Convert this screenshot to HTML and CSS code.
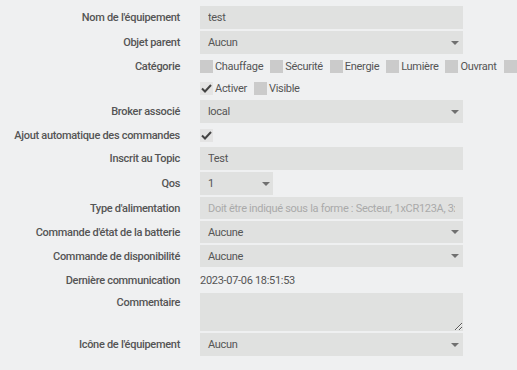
FILE: index.html
```html
<!DOCTYPE html>
<html>
<head>
  <meta charset="utf-8">
  <title>Equipement</title>
  <link rel="stylesheet" href="styles.css">
</head>
<body>
  <form class="eq-form">
    <div class="form-group">
      <label>Nom de l'équipement</label>
      <div class="control"><input type="text" class="field" value="test"></div>
    </div>
    <div class="form-group">
      <label>Objet parent</label>
      <div class="control"><div class="field select">Aucun</div></div>
    </div>
    <div class="form-group check-row">
      <label>Catégorie</label>
      <div class="control checks">
        <span class="check"><span class="box"></span>Chauffage</span>
        <span class="check"><span class="box"></span>Sécurité</span>
        <span class="check"><span class="box"></span>Energie</span>
        <span class="check"><span class="box"></span>Lumière</span>
        <span class="check"><span class="box"></span>Ouvrant</span>
        <span class="check"><span class="box"></span></span>
      </div>
    </div>
    <div class="form-group check-row">
      <label></label>
      <div class="control checks">
        <span class="check"><span class="box checked"><svg width="13" height="13" viewBox="0 0 13 13"><path d="M2 6.5 L5 9.5 L11 3" fill="none" stroke="#444" stroke-width="2"/></svg></span>Activer</span>
        <span class="check"><span class="box"></span>Visible</span>
      </div>
    </div>
    <div class="form-group">
      <label>Broker associé</label>
      <div class="control"><div class="field select">local</div></div>
    </div>
    <div class="form-group check-row">
      <label>Ajout automatique des commandes</label>
      <div class="control checks">
        <span class="check"><span class="box checked"><svg width="13" height="13" viewBox="0 0 13 13"><path d="M2 6.5 L5 9.5 L11 3" fill="none" stroke="#444" stroke-width="2"/></svg></span></span>
      </div>
    </div>
    <div class="form-group">
      <label>Inscrit au Topic</label>
      <div class="control"><input type="text" class="field" value="Test"></div>
    </div>
    <div class="form-group">
      <label>Qos</label>
      <div class="control"><div class="field select small">1</div></div>
    </div>
    <div class="form-group slim">
      <label>Type d'alimentation</label>
      <div class="control"><input type="text" class="field" placeholder="Doit être indiqué sous la forme : Secteur, 1xCR123A, 3xAA"></div>
    </div>
    <div class="form-group slim">
      <label>Commande d'état de la batterie</label>
      <div class="control"><div class="field select">Aucune</div></div>
    </div>
    <div class="form-group slim">
      <label>Commande de disponibilité</label>
      <div class="control"><div class="field select">Aucune</div></div>
    </div>
    <div class="form-group text-row">
      <label>Dernière communication</label>
      <div class="control"><span class="static">2023-07-06 18:51:53</span></div>
    </div>
    <div class="form-group top">
      <label>Commentaire</label>
      <div class="control"><textarea class="field area"></textarea></div>
    </div>
    <div class="form-group">
      <label>Icône de l'équipement</label>
      <div class="control"><div class="field select">Aucun</div></div>
    </div>
  </form>
</body>
</html>
```

FILE: styles.css
```css
body {
  margin: 0;
  background-color: #eff0f1;
  font-family: Roboto, "Liberation Sans", sans-serif;
  font-size: 11px;
  letter-spacing: -0.3px;
  color: #555;
  overflow: hidden;
}

.eq-form {
  padding-top: 6px;
  display: flex;
  flex-direction: column;
  gap: 2px;
}

.form-group {
  display: grid;
  grid-template-columns: 180px 263px;
  column-gap: 20px;
  align-items: center;
  height: 23px;
}

.form-group label {
  text-align: right;
  font-weight: 500;
  color: #555;
  white-space: nowrap;
}

.form-group.check-row {
  height: 20px;
}

.form-group.slim {
  height: 22px;
}

.form-group.text-row {
  height: 22px;
}

.form-group.top {
  height: 38px;
  align-items: start;
}

.form-group.top label {
  padding-top: 3px;
}

.field {
  box-sizing: border-box;
  width: 100%;
  height: 100%;
  display: block;
  margin: 0;
  padding: 0 8px;
  border: none;
  background-color: #e0e1e0;
  font-family: inherit;
  font-size: 11px;
  letter-spacing: -0.3px;
  color: #555;
  outline: none;
}

.control {
  height: 100%;
}

.check-row .control,
.text-row .control {
  display: flex;
  align-items: center;
}

.field::placeholder {
  color: #aaa;
}

.select {
  position: relative;
  display: flex;
  align-items: center;
}

.select::after {
  content: "";
  position: absolute;
  right: 4px;
  top: 50%;
  margin-top: -2px;
  border-left: 4px solid transparent;
  border-right: 4px solid transparent;
  border-top: 4px solid #707070;
}

.select.small {
  width: 73px;
}

.select.small::after {
  right: 3px;
}

.area {
  padding: 4px 8px;
  resize: vertical;
}

.checks {
  white-space: nowrap;
  gap: 7px;
}

.check {
  display: inline-flex;
  align-items: center;
  gap: 2px;
}

.box {
  display: inline-block;
  width: 13px;
  height: 13px;
  background-color: #cbcbcb;
}

.box.checked {
  background-color: #e4e4e4;
}

.box svg {
  display: block;
}

.static {
  color: #555;
}
```
